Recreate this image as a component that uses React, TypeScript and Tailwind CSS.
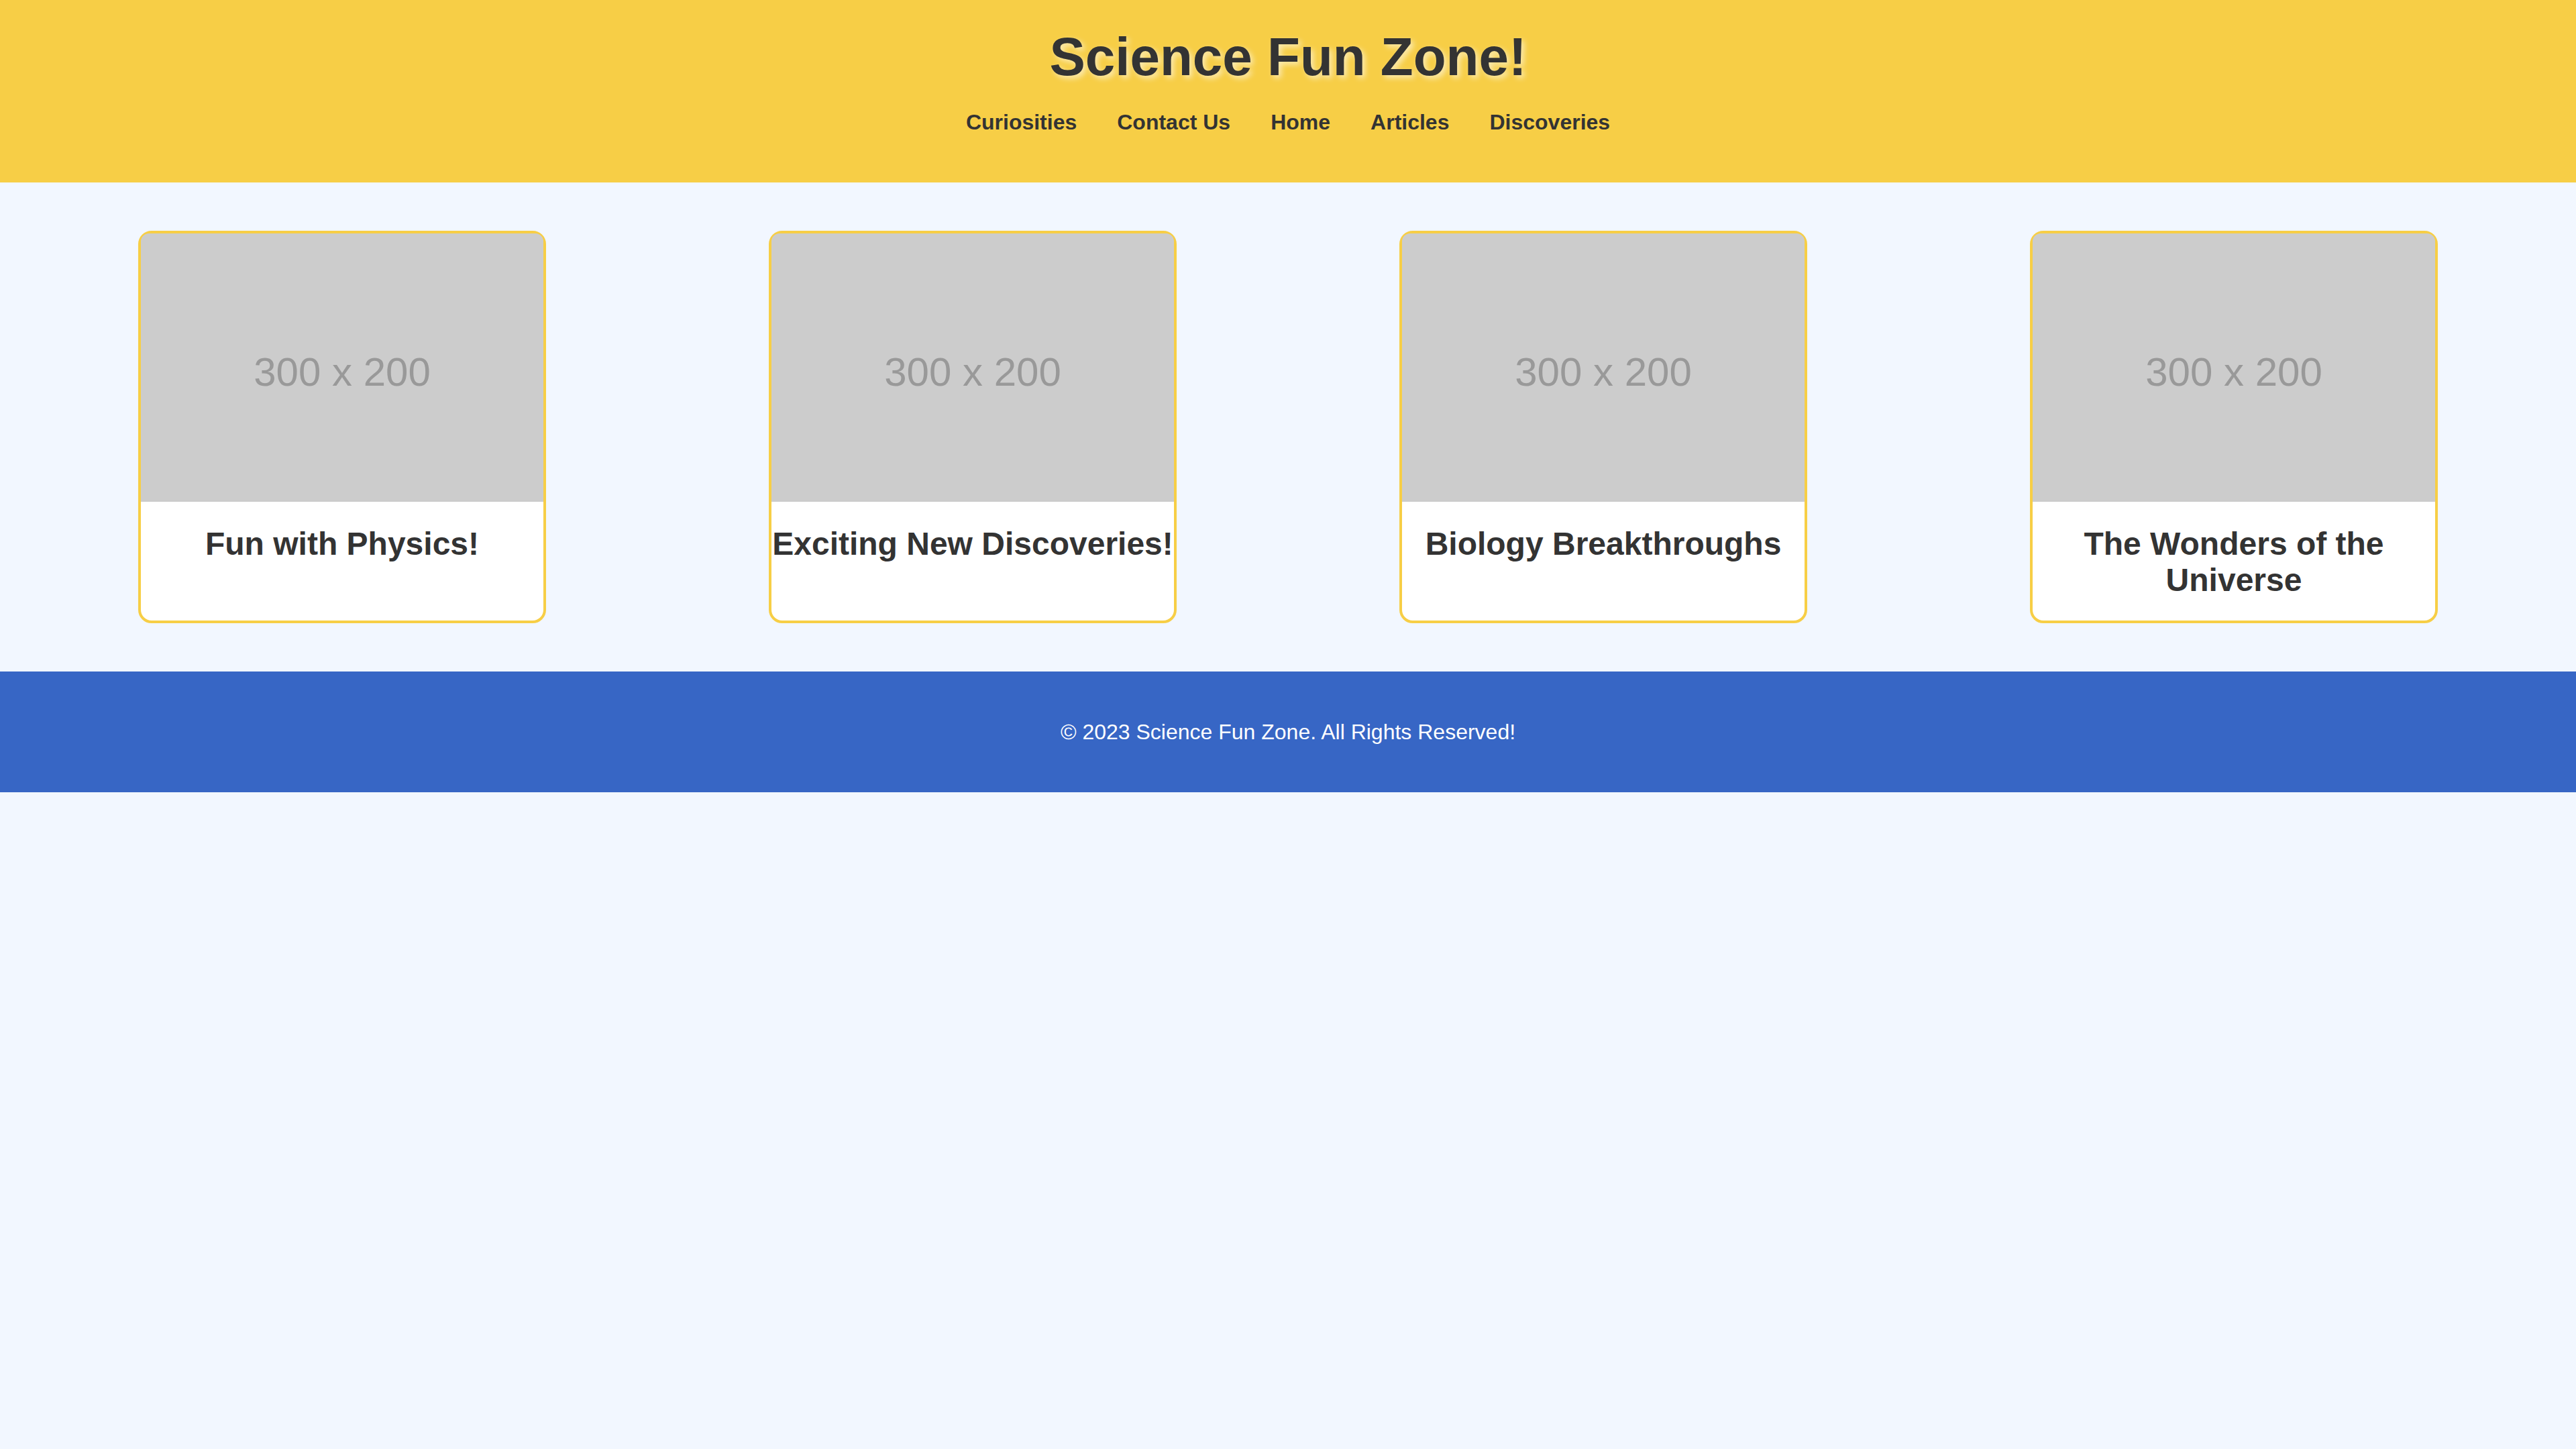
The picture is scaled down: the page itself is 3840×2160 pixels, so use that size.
import React from "react";

const cards = [
  "Fun with Physics!",
  "Exciting New Discoveries!",
  "Biology Breakthroughs",
  "The Wonders of the Universe",
];

const nav = ["Curiosities", "Contact Us", "Home", "Articles", "Discoveries"];

export default function App() {
  return (
    <div
      className="min-h-screen bg-[#f2f7ff] text-[#333333]"
      style={{ fontFamily: '"Liberation Sans", Arial, sans-serif' }}
    >
      <header className="bg-[#f7ce46] pt-[40px] pb-[72px] text-center">
        <h1 className="text-[80px] leading-[90px] font-bold text-[#333333] [text-shadow:4px_4px_8px_rgba(255,255,255,0.6)]">
          Science Fun Zone!
        </h1>
        <nav className="mt-[34px] flex justify-center">
          {nav.map((n) => (
            <a
              key={n}
              className="mx-[30px] text-[32px] leading-[36px] font-bold text-[#333333]"
            >
              {n}
            </a>
          ))}
        </nav>
      </header>

      <main className="flex justify-around px-[40px] py-[40px]">
        {cards.map((c) => (
          <div
            key={c}
            className="m-[32px] flex w-[608px] flex-col rounded-[20px] border-4 border-[#f7ce46] bg-white"
          >
            <div className="flex h-[400px] w-[600px] items-center justify-center rounded-t-[12px] bg-[#cccccc] pt-[14px]">
              <span className="text-[60px] text-[#999999]">300 x 200</span>
            </div>
            <h3 className="mt-[36px] mb-[33px] text-center text-[48px] leading-[54px] font-bold text-[#333333]">
              {c}
            </h3>
          </div>
        ))}
      </main>

      <footer className="bg-[#3766c5] py-[72px] text-center">
        <p className="text-[32px] leading-[36px] text-white">
          © 2023 Science Fun Zone. All Rights Reserved!
        </p>
      </footer>
    </div>
  );
}
